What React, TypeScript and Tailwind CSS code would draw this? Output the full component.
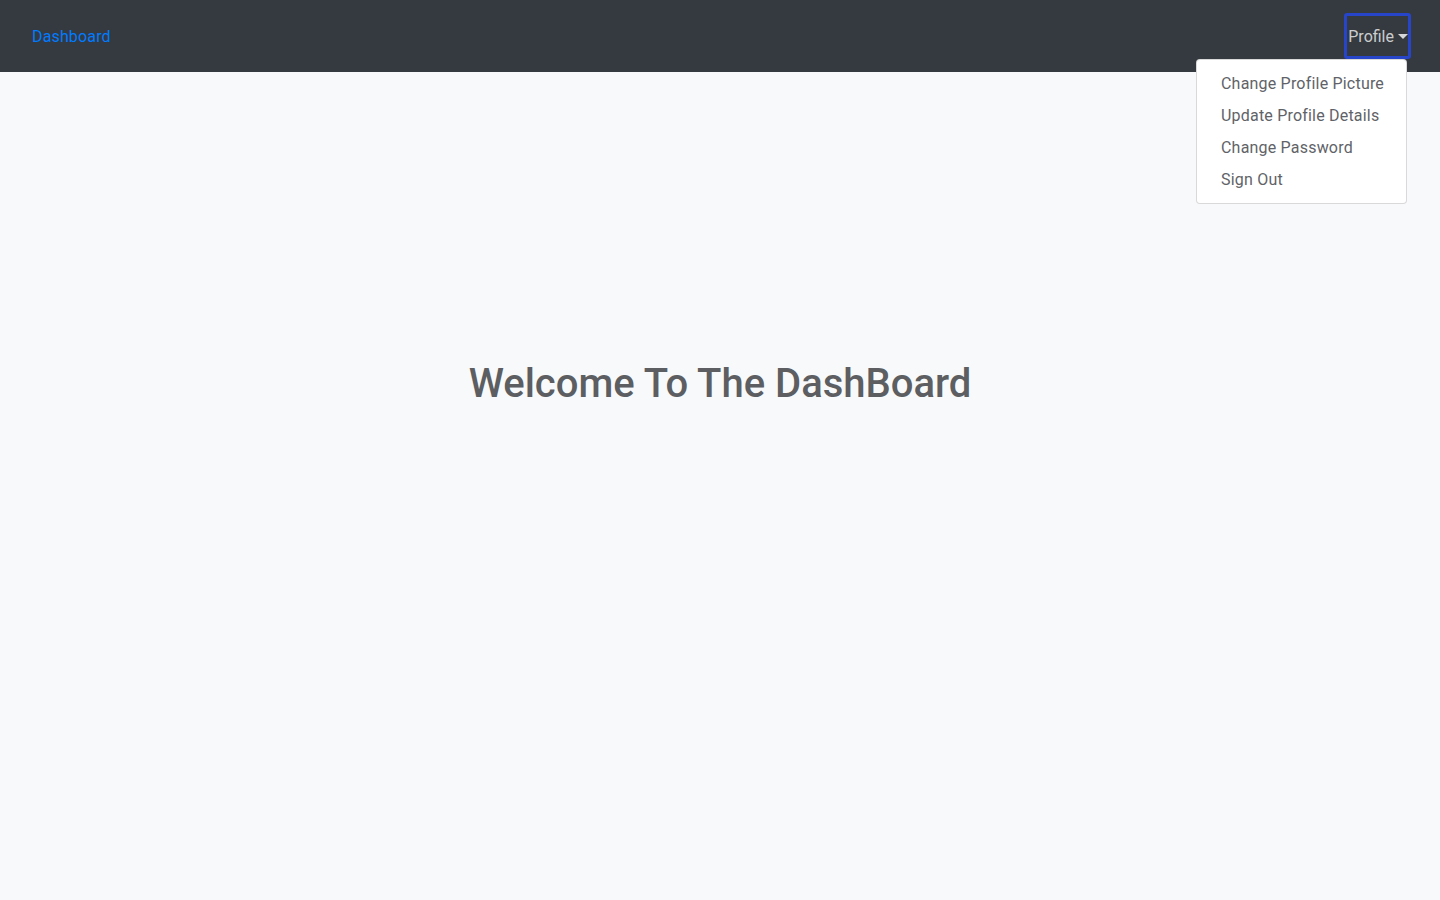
export default function App() {
  const items = ["Change Profile Picture", "Update Profile Details", "Change Password", "Sign Out"];

  return (
    <div className="min-h-screen bg-[#f8f9fa] font-['Roboto',sans-serif]">
      {/* Navbar */}
      <nav className="h-[72px] bg-[#343a40] flex items-center justify-between pl-8 pr-[29px] relative">
        <a className="text-[#007bff] text-base leading-6 tracking-[0.15px] mt-[2px]">Dashboard</a>
        <div className="relative">
          <button className="flex items-center gap-[4px] h-[46px] pl-[1px] pr-0 pt-[1px] rounded-[3px] border-[3px] border-[#2645c8] text-[rgba(255,255,255,0.75)] text-base whitespace-nowrap">
            Profile
            <span className="inline-block w-0 h-0 border-l-[5px] border-r-[5px] border-t-[5px] border-l-transparent border-r-transparent border-t-[rgba(255,255,255,0.8)]" />
          </button>
          <div className="absolute right-[4px] top-[46px] w-[211px] bg-white border border-[rgba(0,0,0,0.15)] rounded pt-2 pb-[7px] z-10">
            {items.map((t) => (
              <div key={t} className="px-6 h-8 flex items-center text-base tracking-[0.2px] text-[#5f6368] whitespace-nowrap">
                {t}
              </div>
            ))}
          </div>
        </div>
      </nav>

      {/* Main */}
      <main className="flex justify-center pt-[288px]">
        <h1 className="text-[40px] leading-[48px] font-medium text-[#5c5e62]">Welcome To The DashBoard</h1>
      </main>
    </div>
  );
}
